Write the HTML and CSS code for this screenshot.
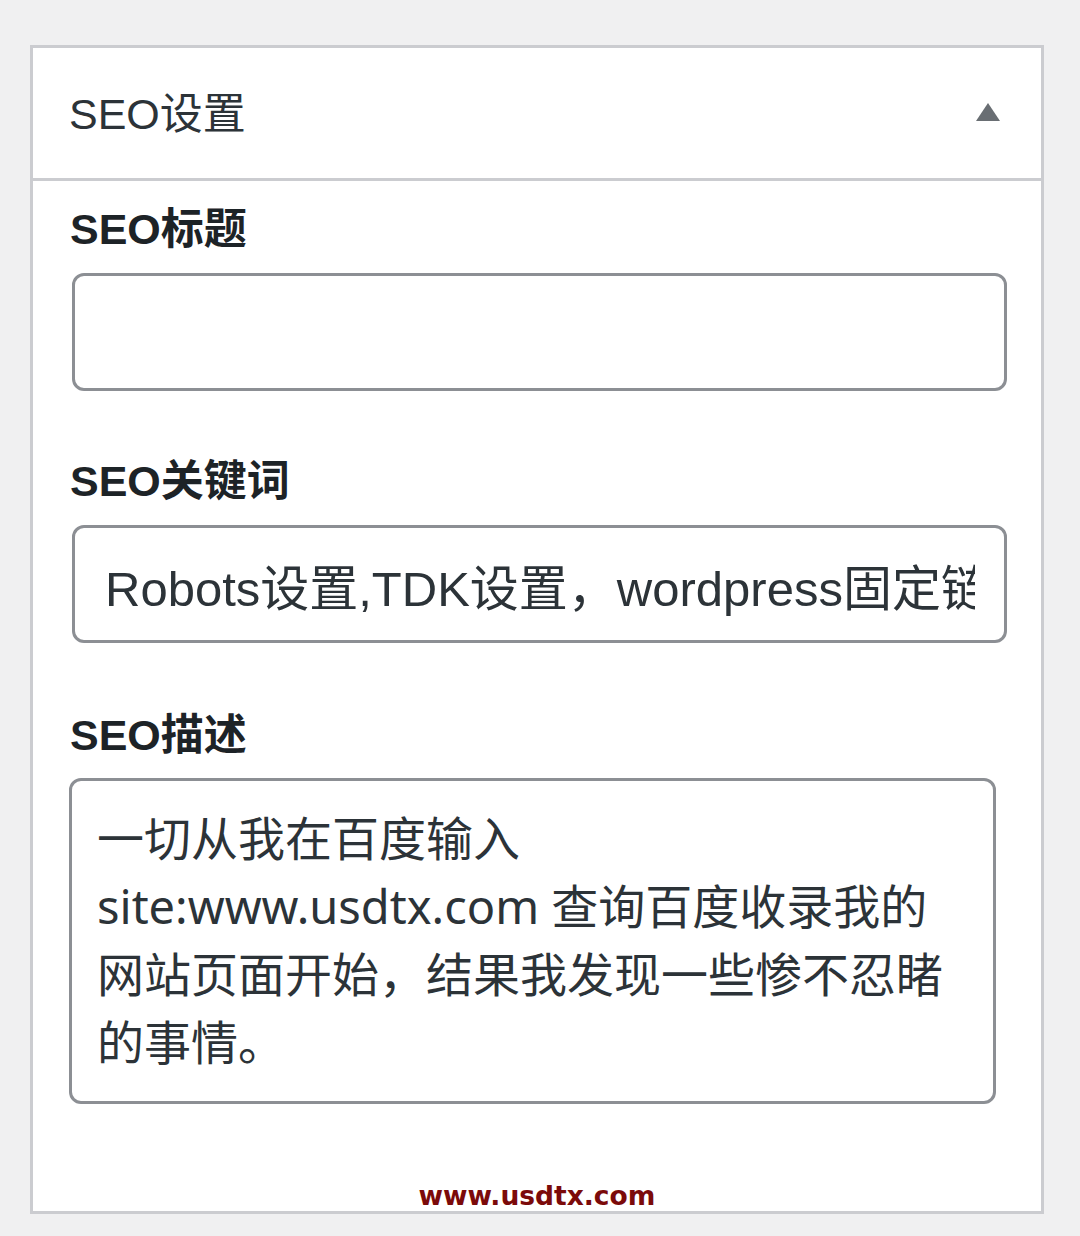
FILE: index.html
```html
<!DOCTYPE html>
<html lang="zh-CN">
<head>
    <meta charset="UTF-8">
    <meta name="viewport" content="width=device-width, initial-scale=1.0">
    <title>SEO设置</title>
    <link rel="stylesheet" href="styles.css">
</head>
<body>
    <div class="seo-box">
        <div class="seo-head">
            <h2 class="seo-title">SEO设置</h2>
            <svg class="toggle" width="24" height="18" viewBox="0 0 24 18">
                <polygon points="12,0 24,18 0,18" fill="#696e73"/>
            </svg>
        </div>

        <div class="seo-body">
            <div class="field">
                <label class="field-label" for="seo-title">SEO标题</label>
                <input class="field-input" id="seo-title" type="text" value="">
            </div>
            <div class="field field-gap">
                <label class="field-label" for="seo-keywords">SEO关键词</label>
                <input class="field-input" id="seo-keywords" type="text" value="Robots设置,TDK设置，wordpress固定链接设置">
            </div>
            <div class="field field-gap-2">
                <label class="field-label" for="seo-desc">SEO描述</label>
                <textarea class="field-area" id="seo-desc">一切从我在百度输入site:www.usdtx.com 查询百度收录我的网站页面开始，结果我发现一些惨不忍睹的事情。</textarea>
            </div>
            <div class="watermark">www.usdtx.com</div>
        </div>
    </div>
</body>
</html>
```

FILE: styles.css
```css
* {
    margin: 0;
    padding: 0;
    box-sizing: border-box;
}
body {
    background-color: #f0f0f1;
    padding: 45px 0 0 30px;
    font-family: "Liberation Sans", "Noto Sans CJK SC", sans-serif;
    color: #1d2327;
}
.seo-box {
    width: 1014px;
    background-color: #fff;
    border: 3px solid #cbccd0;
}
.seo-head {
    height: 133px;
    padding: 0 41px 0 36px;
    border-bottom: 3px solid #cbccd0;
    display: flex;
    align-items: center;
    justify-content: space-between;
}
.seo-title {
    font-size: 43px;
    font-weight: 400;
    color: #2c3338;
    line-height: 56px;
    padding-top: 2px;
}
.toggle {
    display: block;
    margin-top: -2px;
}
.seo-body {
    padding: 20px 0 0 0;
}
.field {
    display: flex;
    flex-direction: column;
    gap: 16px;
}
.field-gap {
    margin-top: 62px;
}
.field-gap-2 {
    margin-top: 64px;
    gap: 15px;
}
.field-label {
    font-size: 43px;
    font-weight: 700;
    line-height: 56px;
    height: 56px;
    padding-left: 37px;
    color: #1d2327;
}
.field-input {
    margin-left: 39px;
    width: 935px;
    height: 118px;
    border: 3px solid #8c8f94;
    border-radius: 12px;
    padding: 0 29px 0 30px;
    font-family: "Liberation Sans", "Noto Sans CJK SC", sans-serif;
    font-size: 49px;
    color: #2c3338;
    background: #fff;
    outline: none;
}
.field-area {
    margin-left: 36px;
    width: 927px;
    height: 326px;
    border: 3px solid #8c8f94;
    border-radius: 12px;
    padding: 23px 41px 23px 25px;
    font-family: "Noto Sans", "Noto Sans CJK SC", sans-serif;
    font-size: 47px;
    line-height: 68px;
    color: #2c3338;
    background: #fff;
    resize: none;
    overflow: hidden;
    outline: none;
}
.watermark {
    margin-top: 77px;
    height: 30px;
    line-height: 30px;
    text-align: center;
    font-family: "DejaVu Sans", sans-serif;
    font-weight: 700;
    font-size: 26.5px;
    color: #7b0a0a;
}
```
